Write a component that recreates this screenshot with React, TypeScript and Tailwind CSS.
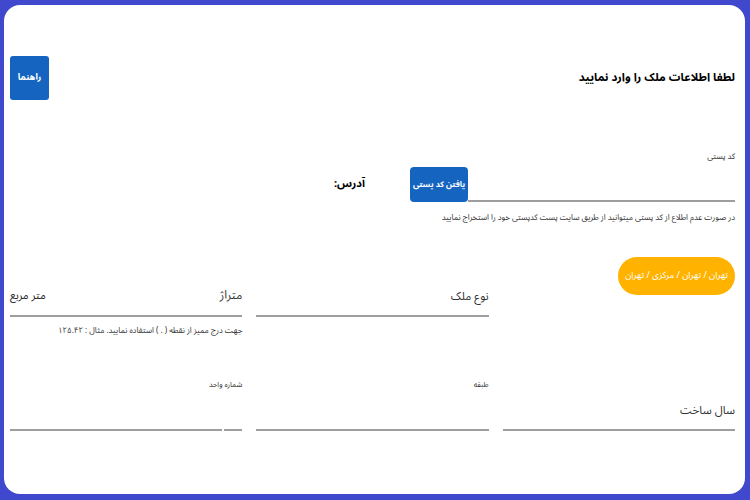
import React from "react";

export default function App() {
  const font = { fontFamily: '"Noto Sans Arabic", "DejaVu Sans Condensed", "DejaVu Sans", sans-serif' };
  return (
    <div className="w-[750px] h-[500px] bg-[#4048cd] pt-[5px] pl-[4px] pr-[5px] pb-[6px]" style={font}>
      <div dir="rtl" className="w-full h-full bg-white rounded-[16px] pr-[10px] pl-[6px] text-[#222] whitespace-nowrap">
        {/* header */}
        <div className="pt-[51px] flex items-center justify-between h-[95px]">
          <div className="text-[11.5px] font-bold text-black tracking-[-0.6px]">لطفا اطلاعات ملک را وارد نمایید</div>
          <button className="w-[39px] h-[44px] bg-[#1565c0] rounded-[3px] text-white text-[9px] font-bold tracking-[-0.5px]">راهنما</button>
        </div>

        {/* postal code */}
        <div className="mt-[51px]">
          <div className="text-[8px] leading-[12px] text-[#333]">کد پستی</div>
          <div className="mt-[4px] flex items-center h-[35px]">
            <div className="w-[267px] h-full border-b-2 border-[#9e9e9e]"></div>
            <button className="w-[58px] h-[35px] bg-[#1565c0] rounded-[4px] text-white text-[8px] font-bold tracking-[-0.5px] whitespace-nowrap">یافتن کد پستی</button>
            <div className="mr-[45px] text-[11px] font-bold text-black">آدرس:</div>
          </div>
          <div className="mt-[10px] text-[8px] leading-[12px] text-[#333] tracking-[-0.5px]">
            در صورت عدم اطلاع از کد پستی میتوانید از طریق سایت پست کدپستی خود را استخراج نمایید
          </div>
        </div>

        {/* row 2 */}
        <div className="mt-[33px] grid grid-cols-3 gap-x-[14px]">
          <div>
            <div className="inline-flex items-center h-[38px] px-[7px] justify-center rounded-[19px] bg-[#ffb300] text-white text-[9px] tracking-[-0.5px] whitespace-nowrap">
              تهران / تهران / مرکزی / تهران
            </div>
          </div>
          <div>
            <div className="h-[60px] flex items-end border-b-2 border-[#9e9e9e] pb-[11px]">
              <span className="text-[11.5px] leading-[16px] text-[#333]">نوع ملک</span>
            </div>
          </div>
          <div>
            <div className="h-[60px] flex items-end justify-between border-b-2 border-[#9e9e9e] pb-[11px]">
              <span className="text-[12px] leading-[16px] text-[#333]">متراژ</span>
              <span className="text-[11px] leading-[16px] text-[#222]">متر مربع</span>
            </div>
            <div className="mt-[8px] text-[8px] leading-[12px] text-[#333] tracking-[-0.5px]">
              جهت درج ممیز از نقطه ( . ) استفاده نمایید. مثال : ۱۲۵.۴۲
            </div>
          </div>
        </div>

        {/* row 3 */}
        <div className="mt-[42px] grid grid-cols-3 gap-x-[14px]">
          <div className="h-[52px] flex items-end border-b-2 border-[#9e9e9e] pb-[11px]">
            <span className="text-[11.5px] leading-[16px] text-[#333]">سال ساخت</span>
          </div>
          <div className="h-[52px] flex flex-col justify-between">
            <div className="text-[7.5px] leading-[12px] text-[#333]">طبقه</div>
            <div className="border-b-2 border-[#9e9e9e]"></div>
          </div>
          <div className="h-[52px] flex flex-col justify-between">
            <div className="text-[7.5px] leading-[12px] text-[#333]">شماره واحد</div>
            <div className="flex gap-[2px]">
              <div className="w-[18px] border-b-2 border-[#9e9e9e]"></div>
              <div className="flex-1 border-b-2 border-[#9e9e9e]"></div>
            </div>
          </div>
        </div>
      </div>
    </div>
  );
}
